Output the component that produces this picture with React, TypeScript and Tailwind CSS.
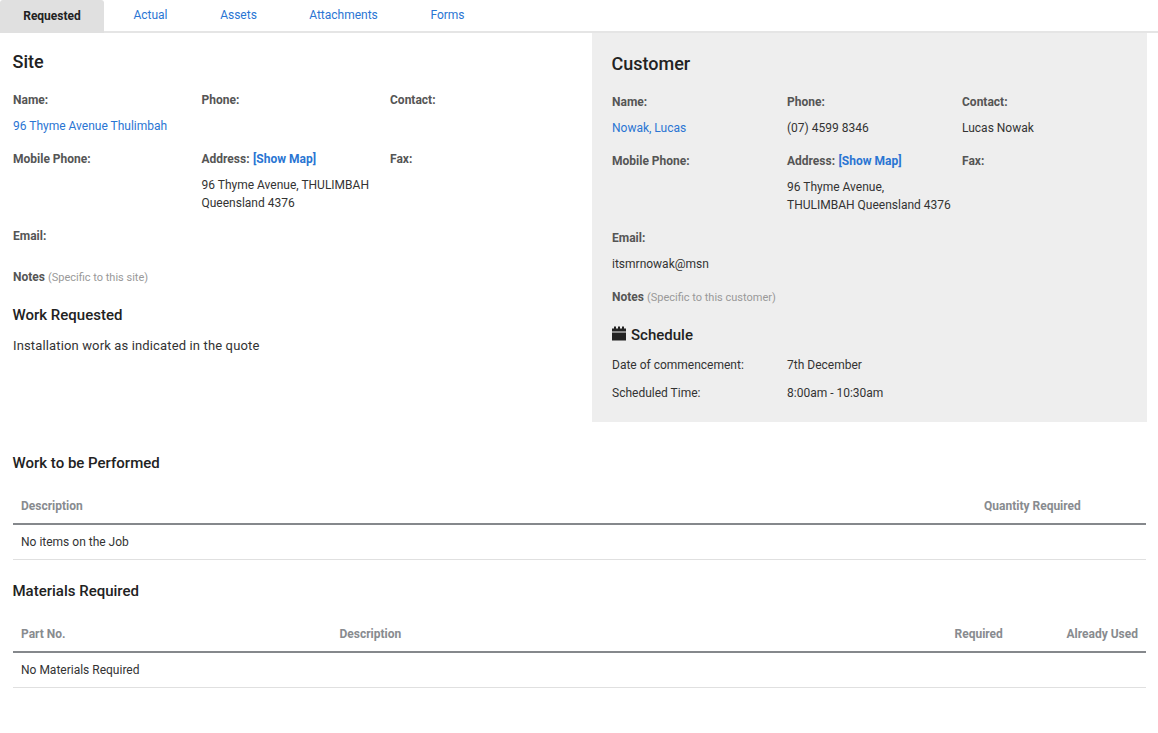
const F = "font-['Roboto',sans-serif]";

function Field({ label, extra, children }: { label: string; extra?: React.ReactNode; children?: React.ReactNode }) {
  return (
    <div className="mb-[15px]">
      <div className="mb-2 text-[12px] leading-[18px] font-bold text-[#555555]">
        {label}
        {extra}
      </div>
      <div className="text-[12px] leading-[18px] text-[#333333]">{children}</div>
    </div>
  );
}

const Map = () => <a className="text-[#2a75d3] ml-[3.5px]">[Show Map]</a>;

function Calendar() {
  return (
    <svg width="14" height="16" viewBox="0 0 14 16" className="mr-[5px] mb-[3px] inline-block" fill="#222222">
      <rect x="2" y="0.5" width="2" height="3" />
      <rect x="6" y="0.5" width="2" height="3" />
      <rect x="10" y="0.5" width="2" height="3" />
      <path d="M0 2.5h14v3H0z" />
      <path d="M0 6.5h14v8H0z" />
    </svg>
  );
}

function Th({ className, children }: { className?: string; children?: React.ReactNode }) {
  return <div className={`text-[12px] leading-[18px] font-bold text-[#888b8f] ${className ?? ""}`}>{children}</div>;
}

export default function App() {
  return (
    <div className={`${F} h-[733px] w-[1158px] bg-white overflow-hidden text-[#222222]`}>
      <div className="flex h-[33px] border-b-2 border-[#e5e5e5] text-[12px]">
        <div className="w-[104px] h-[33px] bg-[#e0e0e0] rounded-t-[3px] flex items-center justify-center font-bold pb-[1px] text-[#222222]">Requested</div>
        <div className="w-[93px] flex items-center justify-center text-[#2a75d3] pb-[1px]">Actual</div>
        <div className="w-[83px] flex items-center justify-center text-[#2a75d3] pb-[1px]">Assets</div>
        <div className="w-[127px] flex items-center justify-center text-[#2a75d3] pb-[1px]">Attachments</div>
        <div className="w-[81px] flex items-center justify-center text-[#2a75d3] pb-[1px]">Forms</div>
      </div>

      <div className="flex h-[389px]">
        <div className="w-[579px] ml-[13px]">
          <h2 className="text-[18px] leading-[24px] font-medium mt-[17px] mb-[17px] -ml-[0.5px]">Site</h2>
          <div className="grid grid-cols-[188.5px_188.5px_188.5px]">
            <Field label="Name:"><a className="text-[#2a75d3]">96 Thyme Avenue Thulimbah</a></Field>
            <Field label="Phone:" />
            <Field label="Contact:" />
            <Field label="Mobile Phone:" />
            <Field label="Address:" extra={<Map />}>96 Thyme Avenue, THULIMBAH<br />Queensland 4376</Field>
            <Field label="Fax:" />
            <Field label="Email:" />
          </div>
          <div className="text-[12px] leading-[18px] font-bold text-[#555555]">
            Notes <span className="font-normal text-[11px] text-[#999999]">(Specific to this site)</span>
          </div>
          <h3 className="text-[15px] leading-[20px] font-medium mt-[18px] -ml-[0.5px]">Work Requested</h3>
          <p className="text-[13px] leading-[20px] mt-[11px] text-[#333333] tracking-[0.14px]">Installation work as indicated in the quote</p>
        </div>

        <div className="w-[555px] bg-[#eeeeee] px-5">
          <h2 className="text-[18px] leading-[24px] font-medium mt-[19px] mb-[17px] -ml-[0.5px]">Customer</h2>
          <div className="grid grid-cols-[175px_175px_175px]">
            <Field label="Name:"><a className="text-[#2a75d3]">Nowak, Lucas</a></Field>
            <Field label="Phone:">(07) 4599 8346</Field>
            <Field label="Contact:">Lucas Nowak</Field>
            <Field label="Mobile Phone:" />
            <Field label="Address:" extra={<Map />}>96 Thyme Avenue,<br />THULIMBAH Queensland 4376</Field>
            <Field label="Fax:" />
            <Field label="Email:">itsmrnowak@msn</Field>
          </div>
          <div className="text-[12px] leading-[18px] font-bold text-[#555555]">
            Notes <span className="font-normal text-[11px] text-[#999999]">(Specific to this customer)</span>
          </div>
          <h3 className="text-[15px] leading-[20px] font-medium mt-[18px] flex items-center"><Calendar />Schedule</h3>
          <div className="grid grid-cols-[175px_1fr] text-[12px] leading-[18px] text-[#333333] mt-[11px] gap-y-[10px]">
            <div>Date of commencement:</div><div>7th December</div>
            <div>Scheduled Time:</div><div>8:00am - 10:30am</div>
          </div>
        </div>
      </div>

      <div className="ml-[13px] w-[1133px]">
        <h3 className="text-[15px] leading-[20px] font-medium mt-[31px] -ml-[0.5px]">Work to be Performed</h3>
        <div className="mt-[24px] flex px-2 pb-2 border-b-2 border-[#85888c]">
          <Th className="flex-1">Description</Th>
          <Th className="w-[154px]">Quantity Required</Th>
        </div>
        <div className="px-2 py-2 text-[12px] leading-[18px] text-[#333333] border-b border-[#e0e0e0]">No items on the Job</div>

        <h3 className="text-[15px] leading-[20px] font-medium mt-[21px] -ml-[0.5px]">Materials Required</h3>
        <div className="mt-[24px] flex px-2 pb-2 border-b-2 border-[#85888c]">
          <Th className="w-[318.5px]">Part No.</Th>
          <Th className="flex-1">Description</Th>
          <Th className="w-[112px]">Required</Th>
          <Th>Already Used</Th>
        </div>
        <div className="px-2 py-2 text-[12px] leading-[18px] text-[#333333] border-b border-[#e0e0e0]">No Materials Required</div>
      </div>
    </div>
  );
}
